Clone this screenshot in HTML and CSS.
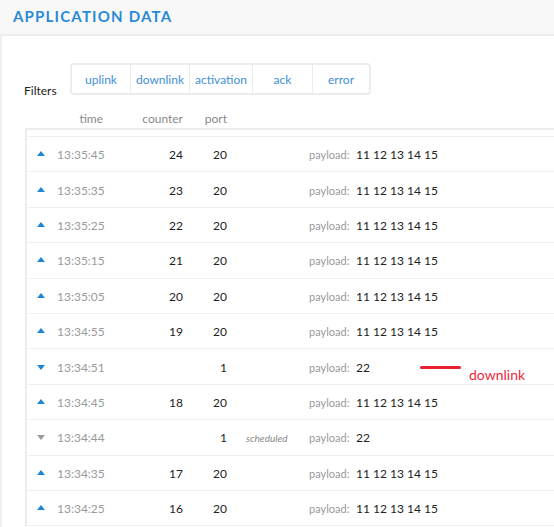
FILE: index.html
```html
<!DOCTYPE html>
<html>
<head>
<meta charset="utf-8">
<link rel="stylesheet" href="styles.css">
</head>
<body>
<div class="header"><h1 class="title">APPLICATION DATA</h1></div>
<div class="panel">
  <div class="filters">
    <span class="filters-label">Filters</span>
    <div class="btn-group">
      <span class="btn w60">uplink</span>
      <span class="btn w59">downlink</span>
      <span class="btn w63">activation</span>
      <span class="btn w60">ack</span>
      <span class="btn w59">error</span>
    </div>
  </div>
  <div class="cols">
    <span></span>
    <span class="col-time">time</span>
    <span class="num">counter</span>
    <span class="num">port</span>
  </div>
  <div class="table">
    <div class="spacer"></div>
    <div class="row"><i class="arrow up"></i><span class="time">13:35:45</span><span class="num">24</span><span class="num">20</span><span></span><span class="label">payload:</span><span class="val">11 12 13 14 15</span></div>
    <div class="row"><i class="arrow up"></i><span class="time">13:35:35</span><span class="num">23</span><span class="num">20</span><span></span><span class="label">payload:</span><span class="val">11 12 13 14 15</span></div>
    <div class="row"><i class="arrow up"></i><span class="time">13:35:25</span><span class="num">22</span><span class="num">20</span><span></span><span class="label">payload:</span><span class="val">11 12 13 14 15</span></div>
    <div class="row"><i class="arrow up"></i><span class="time">13:35:15</span><span class="num">21</span><span class="num">20</span><span></span><span class="label">payload:</span><span class="val">11 12 13 14 15</span></div>
    <div class="row"><i class="arrow up"></i><span class="time">13:35:05</span><span class="num">20</span><span class="num">20</span><span></span><span class="label">payload:</span><span class="val">11 12 13 14 15</span></div>
    <div class="row"><i class="arrow up"></i><span class="time">13:34:55</span><span class="num">19</span><span class="num">20</span><span></span><span class="label">payload:</span><span class="val">11 12 13 14 15</span></div>
    <div class="row"><i class="arrow down"></i><span class="time">13:34:51</span><span class="num"></span><span class="num">1</span><span></span><span class="label">payload:</span><span class="val">22</span><span class="mark"></span><span class="mark-text">downlink</span></div>
    <div class="row"><i class="arrow up"></i><span class="time">13:34:45</span><span class="num">18</span><span class="num">20</span><span></span><span class="label">payload:</span><span class="val">11 12 13 14 15</span></div>
    <div class="row"><i class="arrow down grey"></i><span class="time">13:34:44</span><span class="num"></span><span class="num">1</span><span class="status">scheduled</span><span class="label">payload:</span><span class="val">22</span></div>
    <div class="row"><i class="arrow up"></i><span class="time">13:34:35</span><span class="num">17</span><span class="num">20</span><span></span><span class="label">payload:</span><span class="val">11 12 13 14 15</span></div>
    <div class="row"><i class="arrow up"></i><span class="time">13:34:25</span><span class="num">16</span><span class="num">20</span><span></span><span class="label">payload:</span><span class="val">11 12 13 14 15</span></div>
  </div>
</div>
</body>
</html>
```

FILE: styles.css
```css
html, body {
  margin: 0;
  padding: 0;
  background: #ffffff;
  overflow: hidden;
}
body {
  font-family: Lato, "Open Sans", sans-serif;
  font-size: 12px;
  color: #222;
}
.header {
  height: 34px;
  background: #f8f8f8;
  border-bottom: 2px solid #ececec;
  display: flex;
  align-items: center;
  padding-left: 13px;
}
.title {
  margin: 0;
  font-size: 15px;
  font-weight: 700;
  letter-spacing: 1.2px;
  color: #2a8ad6;
  line-height: 18px;
  margin-top: -3px;
}
.panel {
  border-left: 2px solid #f0f0f0;
  padding-left: 22px;
  padding-top: 27px;
  height: 600px;
}
.filters {
  display: flex;
  align-items: flex-start;
}
.filters-label {
  width: 46px;
  margin-top: 20px;
  line-height: 16px;
  color: #222;
}
.btn-group {
  display: flex;
  height: 28px;
  border: 2px solid #ececec;
  border-radius: 4px;
}
.btn {
  display: flex;
  align-items: center;
  justify-content: center;
  color: #3f8fd8;
  border-left: 1px solid #ececec;
  box-sizing: border-box;
}
.btn:first-child { border-left: none; }
.w60 { width: 60px; }
.w59 { width: 59px; }
.w63 { width: 63px; }
.btn:first-child.w60 { width: 58px; }
.btn:last-child.w59 { width: 57px; }
.cols, .row {
  display: grid;
  grid-template-columns: 30px 46px 80px 44px 82px 47px 1fr;
  align-items: center;
}
.cols {
  margin-left: 3px;
  padding-top: 12px;
  line-height: 16px;
  color: #8a8a8a;
}
.col-time { text-align: right; }
.num { text-align: right; }
.table {
  margin-left: 1px;
  margin-top: 1px;
  border-top: 2px solid #ececec;
  border-left: 2px solid #ececec;
}
.spacer {
  height: 6px;
  border-bottom: 1px solid #efefef;
}
.row {
  position: relative;
  height: 33.4px;
  border-bottom: 1px solid #efefef;
  padding-top: 1px;
  box-sizing: content-box;
}
.arrow {
  display: block;
  width: 0;
  height: 0;
  margin-left: 10px;
  border-left: 4px solid transparent;
  border-right: 4px solid transparent;
}
.arrow.up { border-bottom: 5px solid #1d86d6; margin-top: -2px; }
.arrow.down { border-top: 5px solid #1d86d6; }
.arrow.down.grey { border-top-color: #9a9a9a; }
.time { color: #9a9a9a; font-size: 12px; }
.status {
  padding-left: 19px;
  font-size: 10px;
  font-style: italic;
  color: #8a8a8a;
}
.label {
  font-size: 11px;
  color: #999;
}
.val { color: #222; }
.mark {
  position: absolute;
  left: 393px;
  top: 17px;
  width: 41px;
  height: 3px;
  border-radius: 2px;
  background: #e8202f;
}
.mark-text {
  position: absolute;
  left: 442px;
  top: 18px;
  font-size: 14px;
  line-height: 16px;
  color: #f0283c;
}
```
